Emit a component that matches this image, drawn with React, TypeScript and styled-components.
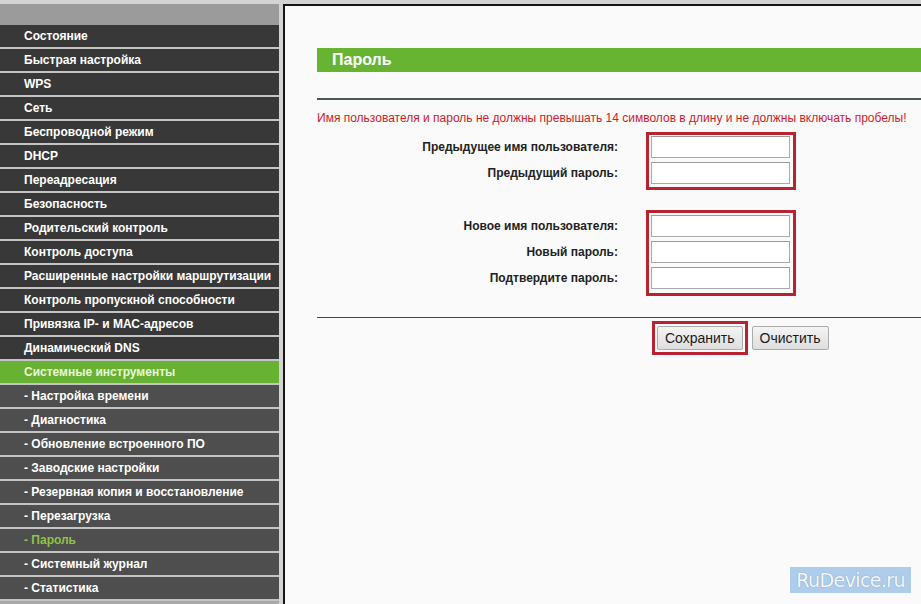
import React from 'react'
import styled, { createGlobalStyle } from 'styled-components'

const GlobalStyle = createGlobalStyle`
  html, body {
    margin: 0;
    padding: 0;
    background: #d3d3d3;
    font-family: "Liberation Sans", Arial, sans-serif;
  }
`

const Frame = styled.div`
  position: relative;
  display: flex;
  height: 600px;
  padding-top: 4px;
  background: #d3d3d3;
  overflow: hidden;
`

const Sidebar = styled.nav`
  width: 279px;
  flex-shrink: 0;
  margin-right: 4px;
  display: flex;
  flex-direction: column;
  background: #a9a9a9;
`

const SideHeader = styled.div`
  height: 21px;
  background: #9b9b9b;
`

const MenuItem = styled.a<{ $sub?: boolean; $active?: boolean; $current?: boolean }>`
  display: block;
  height: 22px;
  line-height: 22px;
  padding-left: 24px;
  border-bottom: 2px solid #c4c4c4;
  background: ${p => (p.$active ? '#67b233' : p.$sub ? '#4e4e4e' : '#383838')};
  color: ${p => (p.$current ? '#8fc34a' : p.$active ? '#e9f7d6' : '#ffffff')};
  font-size: 12px;
  font-weight: bold;
  text-decoration: none;
  white-space: nowrap;
  cursor: pointer;
`

const Main = styled.main`
  flex: 1;
  background: #fafafa;
  border-left: 2px solid #151515;
  border-top: 2px solid #151515;
  padding-left: 32px;
  display: flex;
  flex-direction: column;
`

const TitleBar = styled.h1`
  margin: 42px 0 0;
  height: 24px;
  line-height: 24px;
  padding-left: 15px;
  background: #67b433;
  color: #ffffff;
  font-size: 16px;
  font-weight: bold;
`

const Divider = styled.hr<{ $thick?: boolean }>`
  margin: ${p => (p.$thick ? '26px 0 0' : '21px 0 0')};
  border: none;
  height: ${p => (p.$thick ? '2px' : '1px')};
  background: ${p => (p.$thick ? '#4f5753' : '#2d5342')};
`

const Notice = styled.p`
  margin: 11px 0 0;
  line-height: 14px;
  font-size: 12px;
  color: #d0212b;
  white-space: nowrap;
`

const Group = styled.div<{ $first?: boolean }>`
  display: flex;
  align-items: flex-start;
  gap: 28px;
  margin-top: ${p => (p.$first ? '7px' : '20px')};
`

const Labels = styled.div<{ $loose?: boolean }>`
  width: 301px;
  padding-top: ${p => (p.$loose ? '5px' : '4px')};
  display: flex;
  flex-direction: column;
  gap: 4px;
  text-align: right;
`

const Label = styled.label`
  height: 22px;
  line-height: 22px;
  font-size: 12px;
  font-weight: bold;
  color: #222222;
`

const Highlight = styled.div<{ $loose?: boolean }>`
  border: 3px solid #b9222e;
  padding: ${p => (p.$loose ? '2px 3px 4px 2px' : '1px 3px 3px 2px')};
  display: flex;
  flex-direction: column;
  gap: 4px;
`

const TextField = styled.input`
  box-sizing: border-box;
  width: 139px;
  height: 22px;
  margin: 0;
  border: 1px solid #a9a9a9;
  border-top-color: #9a9a9a;
  background: #ffffff;
  font-family: inherit;
  font-size: 12px;
`

const Actions = styled.div`
  display: flex;
  align-items: center;
  gap: 4px;
  margin: 3px 0 0 335px;
`

const SaveFrame = styled.div`
  border: 3px solid #b9222e;
  padding: 2px;
  display: flex;
`

const Button = styled.button`
  height: 24px;
  padding: 0 7px;
  border: 1px solid #acacac;
  border-radius: 2px;
  background: linear-gradient(#f4f4f4, #dedede);
  color: #1a1a1a;
  font-family: inherit;
  font-size: 14px;
  cursor: pointer;
`

const Watermark = styled.div`
  position: absolute;
  right: 10px;
  bottom: 11px;
  height: 26px;
  line-height: 26px;
  padding: 0 6px;
  background: rgba(160, 196, 232, 0.85);
  color: #f4f8fc;
  font-family: "DejaVu Sans", sans-serif;
  font-size: 19px;
  letter-spacing: -0.6px;
  text-shadow: 0 0 1px #6f8aa6;
`

const menu: { label: string; sub?: boolean; active?: boolean; current?: boolean }[] = [
  { label: 'Состояние' },
  { label: 'Быстрая настройка' },
  { label: 'WPS' },
  { label: 'Сеть' },
  { label: 'Беспроводной режим' },
  { label: 'DHCP' },
  { label: 'Переадресация' },
  { label: 'Безопасность' },
  { label: 'Родительский контроль' },
  { label: 'Контроль доступа' },
  { label: 'Расширенные настройки маршрутизации' },
  { label: 'Контроль пропускной способности' },
  { label: 'Привязка IP- и МАС-адресов' },
  { label: 'Динамический DNS' },
  { label: 'Системные инструменты', active: true },
  { label: '- Настройка времени', sub: true },
  { label: '- Диагностика', sub: true },
  { label: '- Обновление встроенного ПО', sub: true },
  { label: '- Заводские настройки', sub: true },
  { label: '- Резервная копия и восстановление', sub: true },
  { label: '- Перезагрузка', sub: true },
  { label: '- Пароль', sub: true, current: true },
  { label: '- Системный журнал', sub: true },
  { label: '- Статистика', sub: true },
]

const oldFields = ['Предыдущее имя пользователя:', 'Предыдущий пароль:']
const newFields = ['Новое имя пользователя:', 'Новый пароль:', 'Подтвердите пароль:']

function FieldGroup({ fields, first }: { fields: string[]; first?: boolean }) {
  return (
    <Group $first={first}>
      <Labels $loose={!first}>
        {fields.map(f => (
          <Label key={f}>{f}</Label>
        ))}
      </Labels>
      <Highlight $loose={!first}>
        {fields.map((f, i) => (
          <TextField key={f} type={i === 0 ? 'text' : 'password'} aria-label={f} />
        ))}
      </Highlight>
    </Group>
  )
}

export default function App() {
  return (
    <>
      <GlobalStyle />
      <Frame>
        <Sidebar>
          <SideHeader />
          {menu.map(item => (
            <MenuItem key={item.label} $sub={item.sub} $active={item.active} $current={item.current}>
              {item.label}
            </MenuItem>
          ))}
        </Sidebar>

        <Main>
          <TitleBar>Пароль</TitleBar>
          <Divider $thick />
          <Notice>
            Имя пользователя и пароль не должны превышать 14 символов в длину и не должны включать пробелы!
          </Notice>

          <FieldGroup fields={oldFields} first />
          <FieldGroup fields={newFields} />

          <Divider />
          <Actions>
            <SaveFrame>
              <Button>Сохранить</Button>
            </SaveFrame>
            <Button>Очистить</Button>
          </Actions>
        </Main>

        <Watermark>RuDevice.ru</Watermark>
      </Frame>
    </>
  )
}
